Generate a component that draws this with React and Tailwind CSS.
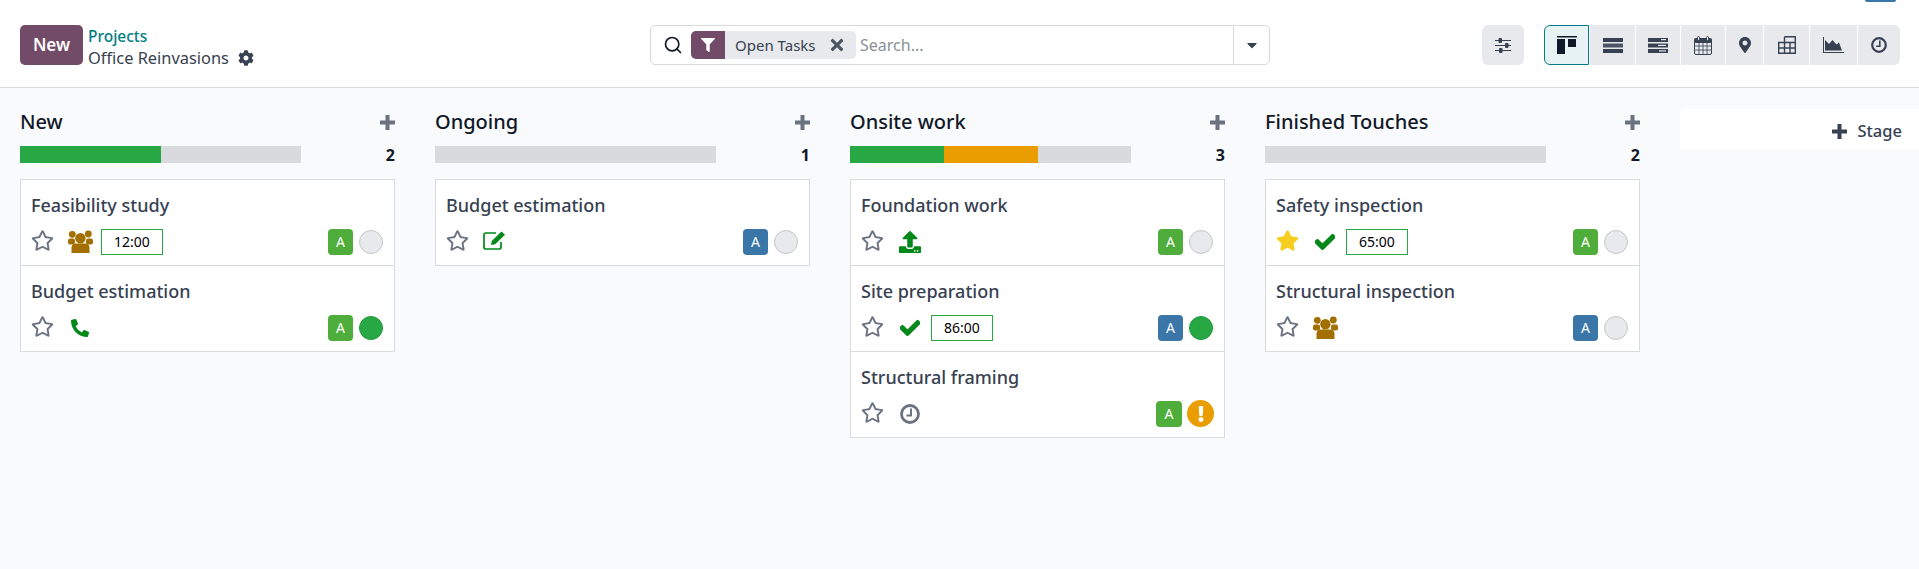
import React from 'react';
import { Search } from 'lucide-react';
import {
  FaCog,
  FaFilter,
  FaTimes,
  FaCaretDown,
  FaRegStar,
  FaStar,
  FaPhoneAlt,
  FaCheck,
  FaUpload,
  FaMapMarkerAlt,
  FaExclamation,
} from 'react-icons/fa';

const GREEN = 'bg-[#4fae3b]';
const BLUE = 'bg-[#3a77a8]';

const PlusIcon = ({ className }) => (
  <svg width="15" height="15" viewBox="0 0 15 15" fill="currentColor" className={className}>
    <path d="M5.5 0h4v5.5H15v4H9.5V15h-4V9.5H0v-4h5.5z" />
  </svg>
);

const KanbanIcon = () => (
  <svg width="20" height="18" viewBox="0 0 20 18" fill="#111827">
    <rect x="0" y="0" width="20" height="1.5" />
    <rect x="0" y="3" width="8" height="15" />
    <rect x="11" y="3" width="8" height="8" />
  </svg>
);

const ListIcon = () => (
  <svg width="20" height="15" viewBox="0 0 20 15" fill="#374151">
    <rect x="0" y="0" width="20" height="4" />
    <rect x="0" y="5.5" width="20" height="4" fill="#4b5563" />
    <rect x="0" y="11" width="20" height="4" />
  </svg>
);

const ActivityIcon = () => (
  <svg width="20" height="15" viewBox="0 0 20 15" fill="#374151">
    <rect x="0" y="0" width="20" height="4" />
    <rect x="0" y="5.5" width="20" height="4" />
    <rect x="0" y="11" width="20" height="4" />
    <rect x="13" y="1" width="5" height="1.2" fill="#e7e9ed" />
    <rect x="10" y="6.8" width="8" height="1.2" fill="#e7e9ed" />
    <rect x="11" y="12.3" width="7" height="1.2" fill="#e7e9ed" />
  </svg>
);

const CalendarIcon = () => (
  <svg width="18" height="19" viewBox="0 0 18 19" fill="none" stroke="#374151">
    <rect x="0.5" y="3.5" width="17" height="15" rx="1.5" />
    <rect x="0.5" y="2.5" width="17" height="4" rx="1" fill="#374151" />
    <rect x="3.5" y="0.5" width="2" height="4" rx="1" fill="#e7e9ed" />
    <rect x="12.5" y="0.5" width="2" height="4" rx="1" fill="#e7e9ed" />
    <path d="M0.5 10h17M0.5 14h17M5 6.5v12M9 6.5v12M13 6.5v12" strokeWidth="0.8" />
  </svg>
);

const PivotIcon = () => (
  <svg width="18" height="18" viewBox="0 0 18 18" fill="none" stroke="#374151" strokeWidth="1.4">
    <path d="M6.5 0.7H17.3V17.3H0.7V6.5H17.3M0.7 12H17.3M6.5 0.7V17.3M12 6.5V17.3" />
  </svg>
);

const GraphIcon = () => (
  <svg width="21" height="16" viewBox="0 0 21 16" fill="#374151">
    <rect x="0" y="0" width="1" height="16" />
    <rect x="0" y="15" width="21" height="1" />
    <path d="M2 13.5V3l4 4 3.500-4 4 4.500 2.500-2 3 8z" />
  </svg>
);

const SlidersIcon = () => (
  <svg width="16" height="15" viewBox="0 0 16 15" fill="#374151">
    <rect x="0" y="2" width="16" height="1" />
    <rect x="0" y="7" width="16" height="1" />
    <rect x="0" y="12" width="16" height="1" />
    <rect x="3.500" y="0" width="3.500" height="5" rx="1" />
    <rect x="10" y="5" width="3.500" height="5" rx="1" />
    <rect x="4" y="10" width="3.500" height="5" rx="1" />
  </svg>
);

const ClockIcon = ({ size, className }) => (
  <svg width={size} height={size} viewBox="0 0 20 20" fill="none" stroke="currentColor" className={className}>
    <circle cx="10" cy="10" r="8.500" strokeWidth="2.800" />
    <path d="M11 4.500V11.500H6.500" strokeWidth="2" />
  </svg>
);

const UsersIcon = () => (
  <svg width="25" height="24" viewBox="0 0 25 24" fill="#a36f00">
    <circle cx="4.300" cy="4.300" r="3.400" />
    <circle cx="20.300" cy="4" r="3.400" />
    <circle cx="12.400" cy="8.300" r="5.200" />
    <rect x="0" y="8.500" width="7" height="6" rx="2" />
    <rect x="18" y="8.500" width="7" height="6" rx="2" />
    <path d="M3.500 23v-5.500c0-2.800 2-4 4.500-4h9c2.500 0 4.500 1.200 4.500 4V23z" />
  </svg>
);

const EditIcon = () => (
  <svg width="24" height="19" viewBox="0 0 24 19" fill="#008818" className="-translate-y-px">
    <path
      d="M18 11v5a2 2 0 0 1-2 2H3a2 2 0 0 1-2-2V4a2 2 0 0 1 2-2h10"
      fill="none"
      stroke="#008818"
      strokeWidth="1.700"
    />
    <path d="M8 14l.8-4L18.500 0.500l3.500 3.300L12.200 13.300z" />
  </svg>
);

const views = [
  { icon: <ListIcon />, w: 'w-[45px]', mr: 'mr-[1px]' },
  { icon: <ActivityIcon />, w: 'w-[44px]', mr: 'mr-[1px]' },
  { icon: <CalendarIcon />, w: 'w-[44px]', mr: 'mr-[1px]' },
  { icon: <FaMapMarkerAlt className="text-[16px] text-[#374151]" />, w: 'w-[37px]', mr: 'mr-[1px]' },
  { icon: <PivotIcon />, w: 'w-[45px]', mr: 'mr-[1px]' },
  { icon: <GraphIcon />, w: 'w-[47px]', mr: 'mr-[1px]' },
  { icon: <ClockIcon size={16} className="text-[#374151]" />, w: 'w-[42px] rounded-r-md', mr: '' },
];

const columns = [
  {
    name: 'New',
    count: 2,
    bar: [{ className: 'w-[141px] bg-[#28a745]' }],
    tasks: [
      { title: 'Feasibility study', activity: 'users', time: '12:00', avatar: GREEN, status: 'none' },
      { title: 'Budget estimation', activity: 'phone', avatar: GREEN, status: 'done' },
    ],
  },
  {
    name: 'Ongoing',
    count: 1,
    bar: [],
    tasks: [{ title: 'Budget estimation', activity: 'edit', avatar: BLUE, status: 'none' }],
  },
  {
    name: 'Onsite work',
    count: 3,
    bar: [{ className: 'w-[94px] bg-[#28a745]' }, { className: 'w-[94px] bg-[#e99d00]' }],
    tasks: [
      { title: 'Foundation work', activity: 'upload', avatar: GREEN, status: 'none' },
      { title: 'Site preparation', activity: 'check', time: '86:00', avatar: BLUE, status: 'done' },
      { title: 'Structural framing', activity: 'clock', avatar: GREEN, status: 'warn' },
    ],
  },
  {
    name: 'Finished Touches',
    count: 2,
    bar: [],
    tasks: [
      { title: 'Safety inspection', starred: true, activity: 'check', time: '65:00', avatar: GREEN, status: 'none' },
      { title: 'Structural inspection', activity: 'users', avatar: BLUE, status: 'none' },
    ],
  },
];

const ActivityGlyph = ({ type }) => {
  if (type === 'users') return <UsersIcon />;
  if (type === 'phone') return <FaPhoneAlt className="text-[18px] text-[#008818]" />;
  if (type === 'edit') return <EditIcon />;
  if (type === 'upload') return <FaUpload className="text-[22px] text-[#008818]" />;
  if (type === 'check') return <FaCheck className="text-[20px] text-[#008818]" stroke="currentColor" strokeWidth="30" />;
  return <ClockIcon size={20} className="text-[#6b7280]" />;
};

const StatusDot = ({ status }) => {
  if (status === 'warn') {
    return (
      <span className="flex h-[27px] w-[27px] items-center justify-center rounded-full bg-[#e99d00] text-white">
        <FaExclamation className="text-[16px]" />
      </span>
    );
  }
  if (status === 'done') {
    return <span className="h-[24px] w-[24px] rounded-full border border-[#219a3d] bg-[#28a745]" />;
  }
  return <span className="h-[24px] w-[24px] rounded-full border border-[#c4c6ca] bg-[#e7e9ed]" />;
};

const TaskCard = ({ task }) => {
  const warn = task.status === 'warn';
  return (
    <div className="box-content h-[85px] px-[10px]">
      <div className="pt-[13px] text-[18px] leading-[24px] font-medium text-[#374151]">{task.title}</div>
      <div className="mt-[11px] flex h-[27px] items-center">
        {task.starred ? (
          <FaStar className="mb-[3px] h-[23px] w-[23px] text-[#f7cd1f]" />
        ) : (
          <FaRegStar className="mb-[3px] h-[23px] w-[23px] text-[#6b7280]" />
        )}
        <span className="ml-[13px] flex w-[26px] justify-center">
          <ActivityGlyph type={task.activity} />
        </span>
        {task.time && (
          <span className="ml-[8px] flex h-[26px] min-w-[62px] items-center justify-center border border-[#28a745] px-2 text-[14px] text-black">
            {task.time}
          </span>
        )}
        <div className={`ml-auto flex items-center ${warn ? 'gap-[5px]' : 'gap-[6px] pr-[1px]'}`}>
          <span
            className={`flex items-center justify-center rounded-[4px] text-[14px] text-white ${task.avatar} ${warn ? 'h-[26px] w-[26px]' : 'h-[26px] w-[25px]'}`}
          >
            A
          </span>
          <StatusDot status={task.status} />
        </div>
      </div>
    </div>
  );
};

const Column = ({ column }) => (
  <div className="w-[375px] shrink-0">
    <div className="flex h-[40px] items-center justify-between">
      <span className="text-[20px] font-medium text-[#111827]">{column.name}</span>
      <PlusIcon className="text-[#6b7280]" />
    </div>
    <div className="mt-[4px] flex h-[17px] items-center justify-between">
      <div className="flex h-[17px] w-[281px] bg-[#d8dadd]">
        {column.bar.map((seg, i) => (
          <div key={i} className={seg.className} />
        ))}
      </div>
      <span className="text-[16px] font-bold text-[#111827]">{column.count}</span>
    </div>
    <div className="mt-[16px] divide-y divide-[#d8dadd] border border-[#d8dadd] bg-white">
      {column.tasks.map((task) => (
        <TaskCard key={task.title} task={task} />
      ))}
    </div>
  </div>
);

export default function App() {
  return (
    <div className="relative flex h-screen flex-col overflow-hidden bg-[#f9fafb] font-['Noto_Sans',sans-serif]">
      {/* tail of a clipped badge above the toolbar */}
      <div className="absolute top-0 left-[1865px] h-[2px] w-[31px] rounded-b bg-[#3a77a8]" />

      {/* Control panel */}
      <header className="flex h-[88px] shrink-0 items-center border-b border-[#d8dadd] bg-white pt-[3px] pl-[20px]">
        <button className="h-[40px] w-[63px] rounded-[5px] bg-[#714b67] text-[17px] font-semibold text-white">
          New
        </button>
        <div className="mt-[4px] ml-[5px] w-[562px] leading-[21px]">
          <div className="text-[15.5px] font-medium text-[#017e84]">Projects</div>
          <div className="flex items-center gap-[9px] text-[16.4px] text-[#374151]">
            Office Reinvasions
            <FaCog className="text-[16px]" />
          </div>
        </div>

        <div className="flex h-[40px] w-[620px] items-center rounded-[5px] border border-[#d8dadd] text-[16px]">
          <Search size={20} strokeWidth={2} className="ml-[12px] text-[#111827]" />
          <div className="ml-[8px] flex h-[28px] w-[165px] items-center overflow-hidden rounded-[5px] bg-[#e7e9ed] text-[#374151]">
            <span className="flex h-full w-[34px] items-center justify-center bg-[#714b67]">
              <FaFilter className="text-[14px] text-white" />
            </span>
            <span className="ml-[10px] text-[15px]">Open Tasks</span>
            <FaTimes className="ml-[12px] text-[18px] text-[#4b5563]" />
          </div>
          <span className="ml-[4px] flex-1 text-[#8a8f98]">Search...</span>
          <span className="flex h-full w-[36px] items-center justify-center border-l border-[#d8dadd]">
            <FaCaretDown className="text-[16px] text-[#374151]" />
          </span>
        </div>

        <button className="ml-[212px] flex h-[40px] w-[42px] items-center justify-center rounded-md bg-[#e7e9ed]">
          <SlidersIcon />
        </button>

        <div className="ml-[20px] flex h-[40px]">
          <button className="mr-[1px] flex w-[45px] items-center justify-center rounded-l-md border border-[#017e84] bg-[#e6f2f3]">
            <KanbanIcon />
          </button>
          {views.map((view, i) => (
            <button key={i} className={`flex items-center justify-center bg-[#e7e9ed] ${view.w} ${view.mr}`}>
              {view.icon}
            </button>
          ))}
        </div>
      </header>

      {/* Kanban board */}
      <main className="flex flex-1 gap-[40px] pt-[14px] pl-[20px]">
        {columns.map((column) => (
          <Column key={column.name} column={column} />
        ))}
        <div className="mt-[7px] flex h-[41px] flex-1 items-center justify-end gap-[10px] rounded-l bg-white pt-[4px] pr-[17px] text-[16.5px] font-medium text-[#374151]">
          <PlusIcon />
          Stage
        </div>
      </main>
    </div>
  );
}
